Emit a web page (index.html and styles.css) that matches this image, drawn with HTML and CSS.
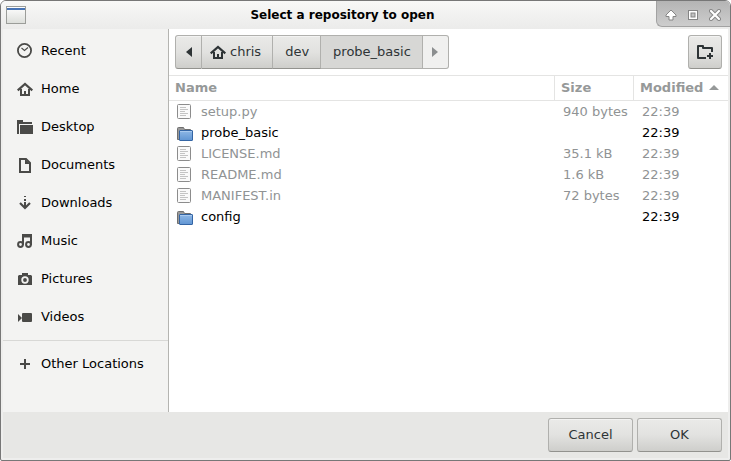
FILE: index.html
```html
<!DOCTYPE html>
<html lang="en">
<head>
<meta charset="utf-8">
<title>Select a repository to open</title>
<link rel="stylesheet" href="styles.css">
</head>
<body>
<svg class="defs" aria-hidden="true">
  <defs>
    <linearGradient id="blue" x1="0" y1="0" x2="0" y2="1"><stop offset="0" stop-color="#8fb8e6"/><stop offset="1" stop-color="#6095d3"/></linearGradient>
    <symbol id="home" viewBox="0 0 16 16"><path d="M.7 9.300 8 3l7.300 6.300" fill="none" stroke="currentColor" stroke-width="2.200"/><path d="M3 8h2v5h2v-3h2v3h2V8h2v7H3z" fill="currentColor"/></symbol>
    <symbol id="file" viewBox="0 0 16 16"><rect x=".5" y=".5" width="13" height="14" rx="1" fill="#fafafa" stroke="#8c8c8c"/><path d="M3 3.500h6M3 5.500h8M3 7.500h5M3 9.500h8M3 11.500h6" stroke="#c4c4c4"/></symbol>
    <symbol id="folder" viewBox="0 0 16 16"><path d="M.5 14.500V3.500q0-1 1-1h5l1 2h6v10z" fill="#999" stroke="#6f6f6f"/><rect x="2.500" y="5.500" width="13" height="10" rx=".5" fill="url(#blue)" stroke="#3465a4"/><path d="M3 6.500h12" stroke="#a9c9ee"/></symbol>
  </defs>
</svg>
<div class="window">
  <header class="titlebar">
    <svg class="app-icon" viewBox="0 0 20 18" aria-hidden="true"><defs><linearGradient id="pane" x1="0" y1="0" x2="0" y2="1"><stop offset="0" stop-color="#fff"/><stop offset="1" stop-color="#dcdeda"/></linearGradient></defs><rect x=".5" y=".5" width="19" height="17" fill="url(#pane)" stroke="#9b9d99"/><path d="M1 3h18" stroke="#4874b5" stroke-width="2"/></svg>
    <h1>Select a repository to open</h1>
    <div class="controls">
      <button type="button" aria-label="Shade"><svg viewBox="0 0 12 12"><path d="M6 1 1 6v1.500h3V11h4V7.500h3V6z" fill="#fff" stroke="#858585"/></svg></button>
      <button type="button" aria-label="Maximize"><svg viewBox="0 0 12 12"><rect x="1.500" y="1.500" width="9" height="9" fill="#fff" stroke="#858585"/><rect x="4" y="4" width="4" height="4" fill="#c2c2c2" stroke="#858585"/></svg></button>
      <button type="button" aria-label="Close"><svg viewBox="0 0 12 12"><path d="m2 2 8 8m0-8-8 8" stroke="#858585" stroke-width="4" stroke-linecap="round"/><path d="m2 2 8 8m0-8-8 8" stroke="#fff" stroke-width="2.200" stroke-linecap="round"/></svg></button>
    </div>
  </header>
  <div class="body">
    <nav class="places">
      <a href="#recent"><svg viewBox="0 0 16 16"><circle cx="7.500" cy="7.500" r="6.600" fill="none" stroke="currentColor" stroke-width="1.800"/><path d="m4.500 5 3 2.500L11 4.500" fill="none" stroke="currentColor" stroke-width="1.100"/></svg>Recent</a>
      <a href="#home"><svg><use href="#home"/></svg>Home</a>
      <a href="#desktop"><svg viewBox="0 0 16 16" fill="currentColor"><path d="M0 2V1h6v2h9v2H2v10H0z"/><path d="M3 6h13v9H3z"/></svg>Desktop</a>
      <a href="#documents"><svg viewBox="0 0 16 16"><path d="M3 2h6l4 4v9H3z" fill="none" stroke="currentColor" stroke-width="2"/><path d="M8 2v5h5z" fill="currentColor"/></svg>Documents</a>
      <a href="#downloads"><svg viewBox="0 0 16 16"><path d="M7 1h2v1H7zM7 4h2v2H7zM7 7h2v5H7z" fill="currentColor"/><path d="m3 8 5 5 5-5" fill="none" stroke="currentColor" stroke-width="2.200"/></svg>Downloads</a>
      <a href="#music"><svg viewBox="0 0 16 16" fill="none" stroke="currentColor" stroke-width="2"><circle cx="3.500" cy="11.500" r="2.400"/><circle cx="11.500" cy="11.500" r="2.400"/><path d="M6 12V2h8v10M6 3.500h8"/></svg>Music</a>
      <a href="#pictures"><svg viewBox="0 0 16 16"><path d="M2 4h3V2h6v2h3l1 1v9H1V5z" fill="currentColor"/><circle cx="8" cy="9" r="2.800" fill="none" stroke="#f3f3f2" stroke-width="1.800"/></svg>Pictures</a>
      <a href="#videos"><svg viewBox="0 0 16 16" fill="currentColor"><path d="M1 5v8l4-4z"/><rect x="5" y="4" width="10" height="9" rx="1"/></svg>Videos</a>
      <hr>
      <a href="#other"><svg viewBox="0 0 16 16"><path d="M3 8h10M8 3v10" stroke="currentColor" stroke-width="2"/></svg>Other Locations</a>
    </nav>
    <main>
      <div class="toolbar">
        <div class="path">
          <button type="button" class="arrow back" aria-label="Back"><svg viewBox="0 0 6 10"><path d="M6 0v10L0 5z" fill="currentColor"/></svg></button>
          <button type="button"><svg class="icon"><use href="#home"/></svg>chris</button>
          <button type="button">dev</button>
          <button type="button" class="current">probe_basic</button>
          <button type="button" class="arrow" aria-label="Forward" disabled><svg viewBox="0 0 6 10"><path d="M0 0v10l6-5z" fill="currentColor"/></svg></button>
        </div>
        <button type="button" class="new-folder" aria-label="Create folder"><svg viewBox="0 0 18 16"><path d="M10 14H2V2h5v2h9v4" fill="none" stroke="currentColor" stroke-width="2" stroke-linejoin="round"/><path d="M11 12h6M14 9v6" stroke="currentColor" stroke-width="2"/></svg></button>
      </div>
      <table>
        <thead><tr><th class="name">Name</th><th class="size">Size</th><th class="modified">Modified<svg viewBox="0 0 10 5"><path d="M0 5h10L5 0z" fill="currentColor"/></svg></th></tr></thead>
        <tbody>
          <tr><td><span class="entry"><svg><use href="#file"/></svg>setup.py</span></td><td>940 bytes</td><td>22:39</td></tr>
          <tr class="folder"><td><span class="entry"><svg><use href="#folder"/></svg>probe_basic</span></td><td></td><td>22:39</td></tr>
          <tr><td><span class="entry"><svg><use href="#file"/></svg>LICENSE.md</span></td><td>35.1 kB</td><td>22:39</td></tr>
          <tr><td><span class="entry"><svg><use href="#file"/></svg>README.md</span></td><td>1.6 kB</td><td>22:39</td></tr>
          <tr><td><span class="entry"><svg><use href="#file"/></svg>MANIFEST.in</span></td><td>72 bytes</td><td>22:39</td></tr>
          <tr class="folder"><td><span class="entry"><svg><use href="#folder"/></svg>config</span></td><td></td><td>22:39</td></tr>
        </tbody>
      </table>
    </main>
  </div>
  <footer>
    <button type="button">Cancel</button>
    <button type="button">OK</button>
  </footer>
</div>
</body>
</html>
```
FILE: styles.css
```css
* { box-sizing: border-box; }
body {
  margin: 0;
  background: #fff;
  color: #000;
  font: 13px/20px "DejaVu Sans", sans-serif;
}
button {
  display: flex;
  align-items: center;
  justify-content: center;
  height: 34px;
  margin: 0;
  border: 1px solid #b0b0ad;
  border-bottom-color: #92928e;
  border-radius: 3px;
  background: linear-gradient(#eaeae8, #e2e2e0 50%, #cececb);
  box-shadow: inset 0 1px #f3f3f2;
  color: #2e3436;
  font: inherit;
}
svg { display: block; flex: none; }
.defs { position: absolute; width: 0; height: 0; }

.window {
  display: flex;
  flex-direction: column;
  min-height: 100vh;
  border: 1px solid #777;
  border-radius: 6px 6px 2px 2px;
  background: #eeeeed;
  overflow: hidden;
}
.titlebar {
  display: grid;
  grid-template-columns: 28px 1fr 74px;
  align-items: start;
  height: 28px;
  background: linear-gradient(#f8f8f7, #ebebea);
}
.app-icon { width: 20px; height: 18px; margin: 5px; }
h1 {
  margin: 4px 0 0;
  font-size: 12px;
  line-height: 20px;
  font-weight: bold;
  text-align: center;
}
.controls {
  display: flex;
  justify-content: center;
  gap: 10px;
  height: 26px;
  padding: 2px 2px 0 0;
  border: solid #a2a2a2;
  border-width: 0 0 1px 1px;
  border-radius: 0 0 0 6px;
  background: linear-gradient(#b4b4b4, #cdcdcd);
}
.controls button {
  width: 12px;
  height: 24px;
  padding: 0;
  border: 0;
  background: none;
  box-shadow: none;
}
.controls svg { width: 12px; height: 12px; }

.body { display: flex; flex: 1; margin: 0 2px; }
.places {
  width: 166px;
  padding-top: 3px;
  border-right: 1px solid #b4b4b1;
  background: #f3f3f2;
}
.places a {
  display: flex;
  align-items: center;
  gap: 8px;
  height: 38px;
  padding-left: 14px;
  color: #000;
  text-decoration: none;
}
.places svg { width: 16px; height: 16px; color: #4a4a48; }
.places hr {
  height: 1px;
  margin: 4px 0;
  border: 0;
  background: #d8d8d6;
}

main { flex: 1; background: #fff; }
.toolbar {
  display: flex;
  justify-content: space-between;
  padding: 6px;
  border-bottom: 1px solid #e4e4e3;
}
.path { display: flex; }
.path button {
  gap: 4px;
  padding: 0 11px 0 12px;
  border-left-width: 0;
  border-radius: 0;
}
.path button:first-child { border-left-width: 1px; border-radius: 3px 0 0 3px; }
.path button:last-child { border-radius: 0 3px 3px 0; }
.path .icon { width: 16px; height: 16px; margin-left: -4px; }
.path .arrow { width: 26px; padding: 0; }
.path .back { width: 27px; }
.path .arrow svg { width: 6px; height: 10px; }
.path .arrow:disabled,
.path .current {
  border-bottom-color: #b0b0ad;
  border-top-color: #b0b0ad;
  background: #f0f0ef;
  box-shadow: none;
}
.path .arrow:disabled { border-color: #b0b0ad; color: #8b8e8f; }
.path .current { background: #d7d7d5; }
.new-folder { width: 34px; padding: 0; }
.new-folder svg { width: 18px; height: 16px; }

table { width: 100%; border-collapse: separate; border-spacing: 0; table-layout: fixed; color: #909394; }
th {
  height: 25px;
  padding: 0 6px;
  border-bottom: 1px solid #e4e4e3;
  color: #969999;
  text-align: left;
  white-space: nowrap;
}
th + th { border-left: 1px solid #e4e4e3; }
.size { width: 79px; }
.modified { width: 95px; }
.modified svg { display: inline-block; width: 10px; height: 5px; margin: 0 0 2px 6px; }
td { height: 21px; padding: 0 8px; white-space: nowrap; }
td + td { padding-left: 9px; }
.entry { display: flex; align-items: center; gap: 8px; }
.entry svg { width: 16px; height: 16px; }
.folder { color: #000; }

footer {
  display: flex;
  justify-content: flex-end;
  gap: 4px;
  margin: 0 2px 2px;
  padding: 6px;
  background: #e7e7e5;
}
footer button { width: 85px; }
```
